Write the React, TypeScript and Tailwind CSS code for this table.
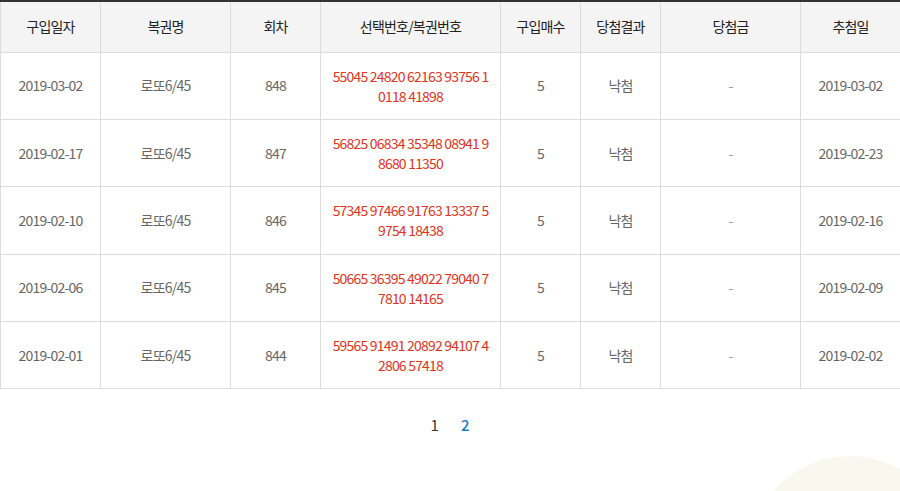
const rows = [
  { date: "2019-03-02", round: "848", nums: ["55045 24820 62163 93756 1", "0118 41898"], draw: "2019-03-02" },
  { date: "2019-02-17", round: "847", nums: ["56825 06834 35348 08941 9", "8680 11350"], draw: "2019-02-23" },
  { date: "2019-02-10", round: "846", nums: ["57345 97466 91763 13337 5", "9754 18438"], draw: "2019-02-16" },
  { date: "2019-02-06", round: "845", nums: ["50665 36395 49022 79040 7", "7810 14165"], draw: "2019-02-09" },
  { date: "2019-02-01", round: "844", nums: ["59565 91491 20892 94107 4", "2806 57418"], draw: "2019-02-02" },
];

const headers = ["구입일자", "복권명", "회차", "선택번호/복권번호", "구입매수", "당첨결과", "당첨금", "추첨일"];
const widths = ["w-[100px]", "w-[130px]", "w-[90px]", "w-[180px]", "w-[80px]", "w-[80px]", "w-[140px]", "w-[100px]"];

export default function App() {
  return (
    <div
      className="relative h-[491px] w-[900px] overflow-hidden bg-white"
      style={{ fontFamily: '"Noto Sans CJK KR", "Noto Sans", sans-serif' }}
    >
      <div className="absolute left-[750px] top-[456px] h-[200px] w-[200px] rounded-full bg-[#f8f8ee]" />
      <table className="relative w-[900px] table-fixed border-collapse border-t-2 border-t-[#333] text-[14px] tracking-[-0.8px]">
        <colgroup>
          {widths.map((w, i) => (
            <col key={i} className={w} />
          ))}
        </colgroup>
        <thead>
          <tr className="h-[51px] bg-[#f4f4f4]">
            {headers.map((h) => (
              <th key={h} className="border border-[#ddd] border-t-0 font-normal text-[#222]">
                {h}
              </th>
            ))}
          </tr>
        </thead>
        <tbody>
          {rows.map((r) => (
            <tr key={r.round} className="h-[67.4px] text-center text-[#666]">
              <td className="border border-[#ddd]">{r.date}</td>
              <td className="border border-[#ddd]">로또6/45</td>
              <td className="border border-[#ddd]">{r.round}</td>
              <td className="border border-[#ddd] leading-[20px] text-[#e2331c]">
                {r.nums[0]}
                <br />
                {r.nums[1]}
              </td>
              <td className="border border-[#ddd]">5</td>
              <td className="border border-[#ddd]">낙첨</td>
              <td className="border border-[#ddd] text-[#999]">-</td>
              <td className="border border-[#ddd]">{r.draw}</td>
            </tr>
          ))}
        </tbody>
      </table>
      <div className="relative mt-[25px] flex justify-center gap-[22px] text-[15px]">
        <span className="text-[#333]">1</span>
        <span className="font-medium text-[#1a7ec6]">2</span>
      </div>
    </div>
  );
}
